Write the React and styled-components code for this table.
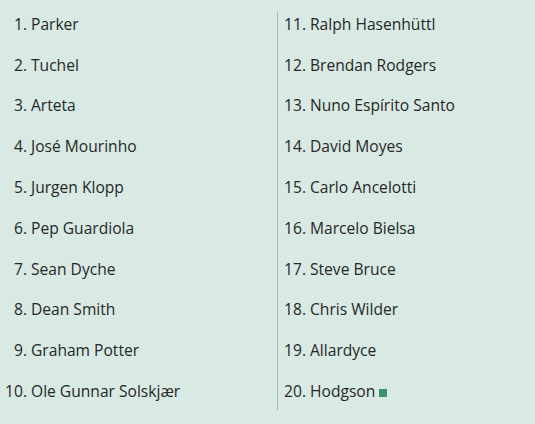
import React from "react";
import styled, { createGlobalStyle } from "styled-components";

const Global = createGlobalStyle`
  html, body { margin: 0; padding: 0; background: #d9e9e3; }
  body { font-family: "Open Sans", "Liberation Sans", sans-serif; }
`;

const Page = styled.div`
  width: 535px;
  height: 424px;
  background: #d9e9e3;
  display: grid;
  grid-template-columns: 277px 1px 1fr;
  padding-top: 3.5px;
  box-sizing: border-box;
`;

const List = styled.ol`
  list-style: none;
  margin: 0;
  padding: 0;
  display: flex;
  flex-direction: column;
`;

const Row = styled.li`
  display: flex;
  height: 40.8px;
  align-items: center;
  font-size: 15.6px;
  color: #262827;
  white-space: nowrap;
`;

const Num = styled.span`
  width: ${(p) => p.$w}px;
  text-align: right;
  flex: none;
  margin-right: 4px;
`;

const Divider = styled.div`
  background: #aab8b2;
  margin: 8.5px 0 0;
  height: 398px;
`;

const Square = styled.span`
  display: inline-block;
  width: 8px;
  height: 8px;
  background: #3a9070;
  margin-left: 4px;
  margin-top: 4px;
`;

const left = [
  "Parker",
  "Tuchel",
  "Arteta",
  "José Mourinho",
  "Jurgen Klopp",
  "Pep Guardiola",
  "Sean Dyche",
  "Dean Smith",
  "Graham Potter",
  "Ole Gunnar Solskjær",
];
const right = [
  "Ralph Hasenhüttl",
  "Brendan Rodgers",
  "Nuno Espírito Santo",
  "David Moyes",
  "Carlo Ancelotti",
  "Marcelo Bielsa",
  "Steve Bruce",
  "Chris Wilder",
  "Allardyce",
  "Hodgson",
];

export default function App() {
  return (
    <>
      <Global />
      <Page>
        <List>
          {left.map((n, i) => (
            <Row key={n}>
              <Num $w={27}>{i + 1}.</Num>
              {n}
            </Row>
          ))}
        </List>
        <Divider />
        <List>
          {right.map((n, i) => (
            <Row key={n}>
              <Num $w={28}>{i + 11}.</Num>
              {n}
              {i === 9 && <Square />}
            </Row>
          ))}
        </List>
      </Page>
    </>
  );
}
